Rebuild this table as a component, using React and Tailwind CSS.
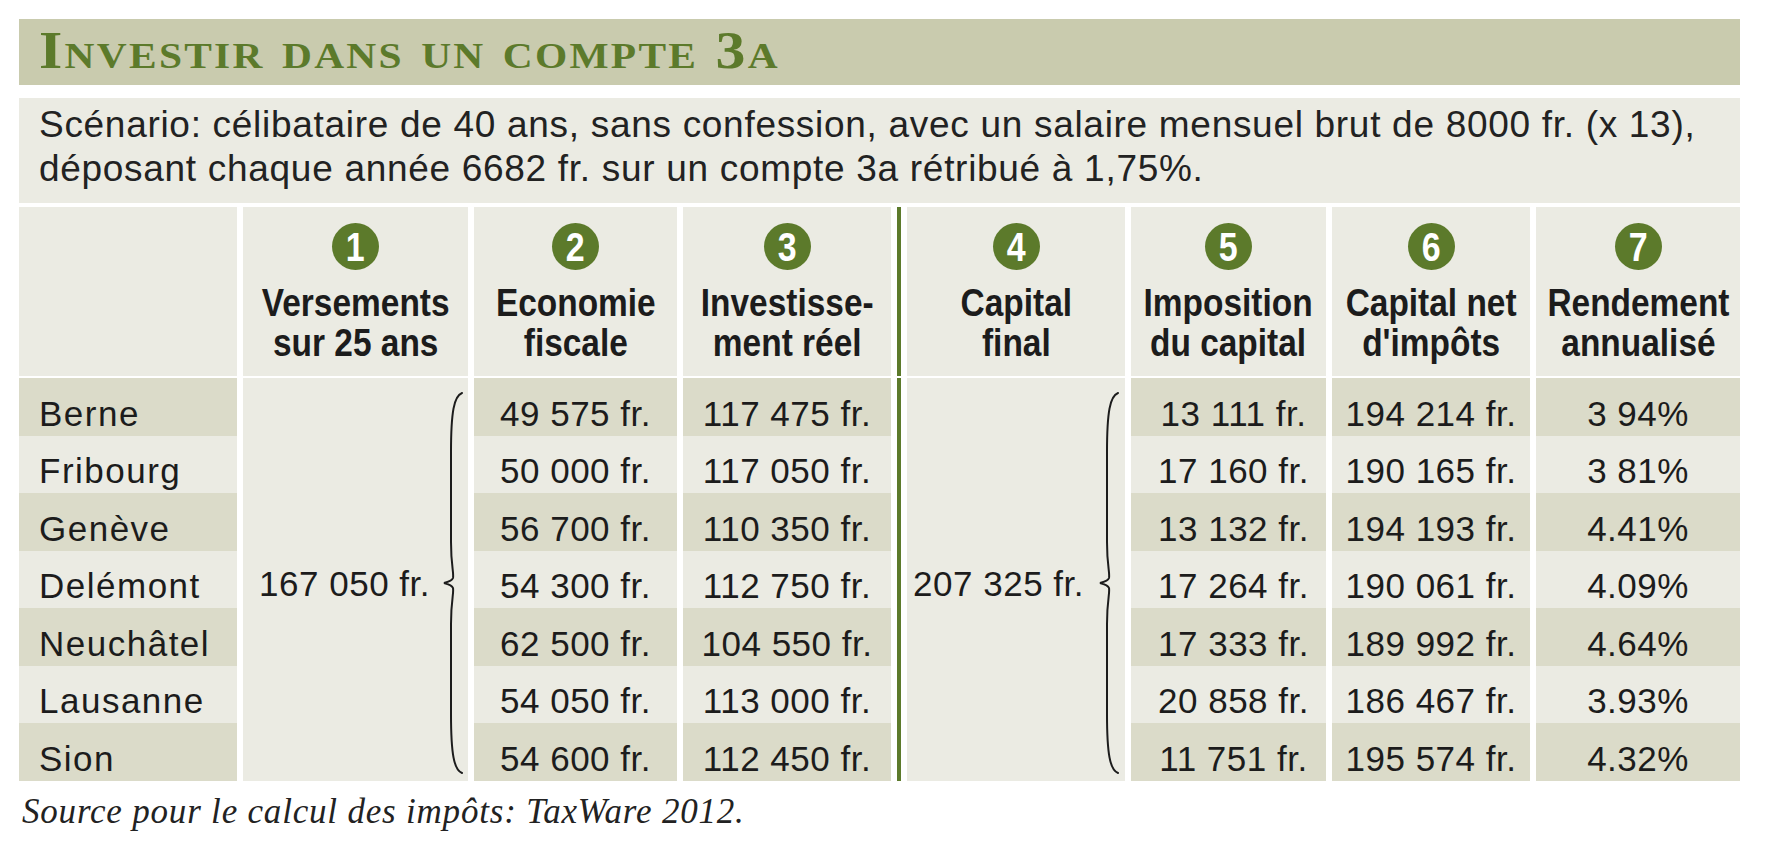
import React from 'react';

const ROWS = [
  { city: 'Berne', eco: '49 575 fr.', inv: '117 475 fr.', tax: '13 111 fr.', net: '194 214 fr.', yld: '3 94%' },
  { city: 'Fribourg', eco: '50 000 fr.', inv: '117 050 fr.', tax: '17 160 fr.', net: '190 165 fr.', yld: '3 81%' },
  { city: 'Genève', eco: '56 700 fr.', inv: '110 350 fr.', tax: '13 132 fr.', net: '194 193 fr.', yld: '4.41%' },
  { city: 'Delémont', eco: '54 300 fr.', inv: '112 750 fr.', tax: '17 264 fr.', net: '190 061 fr.', yld: '4.09%' },
  { city: 'Neuchâtel', eco: '62 500 fr.', inv: '104 550 fr.', tax: '17 333 fr.', net: '189 992 fr.', yld: '4.64%' },
  { city: 'Lausanne', eco: '54 050 fr.', inv: '113 000 fr.', tax: '20 858 fr.', net: '186 467 fr.', yld: '3.93%' },
  { city: 'Sion', eco: '54 600 fr.', inv: '112 450 fr.', tax: '11 751 fr.', net: '195 574 fr.', yld: '4.32%' },
];

const HEADS = [
  { n: '1', l1: 'Versements', l2: 'sur 25 ans' },
  { n: '2', l1: 'Economie', l2: 'fiscale' },
  { n: '3', l1: 'Investisse-', l2: 'ment réel' },
  { n: '4', l1: 'Capital', l2: 'final' },
  { n: '5', l1: 'Imposition', l2: 'du capital' },
  { n: '6', l1: 'Capital net', l2: "d'impôts" },
  { n: '7', l1: 'Rendement', l2: 'annualisé' },
];

const GRID = 'grid grid-cols-[218px_225px_203px_208px_4px_218px_195px_198px_204px] gap-x-[6px]';

function Brace() {
  return (
    <svg width="22" height="382" viewBox="0 0 22 382" fill="none" className="shrink-0">
      <path
        d="M20 1 C12 4, 9 20, 9 60 L9 150 C9 175, 12 180, 11 186 C10 189, 6 190, 2 191 C6 192, 10 193, 11 196 C12 202, 9 207, 9 232 L9 322 C9 362, 12 378, 20 381"
        stroke="#1c1c1c"
        strokeWidth="2"
        strokeLinecap="round"
      />
    </svg>
  );
}

function HeadCell({ head }) {
  return (
    <div className="flex flex-col items-center bg-[#ebebe3] pt-[16px]">
      <div className="flex h-[47px] w-[47px] items-center justify-center rounded-full bg-[#5c7a2b]">
        <span className="inline-block scale-x-85 text-[40px] font-bold leading-none text-white">{head.n}</span>
      </div>
      <div className="mt-[13px] inline-block scale-x-88 whitespace-nowrap text-center text-[38px] font-bold leading-[40px] text-[#1c1c1c]">
        {head.l1}
        <br />
        {head.l2}
      </div>
    </div>
  );
}

function ValueCell({ value, dark, className = '' }) {
  return (
    <div className={`flex items-end justify-center pb-[5px] text-[35px] leading-none tracking-[0.5px] ${dark ? 'bg-[#dbdbc9]' : 'bg-[#ebebe3]'} ${className}`}>
      {value}
    </div>
  );
}

export default function App() {
  return (
    <div className="min-h-screen bg-white pl-[19px] pt-[19px] text-[#1c1c1c] font-['Liberation_Sans',Arial,sans-serif]">
      <div className="w-[1721px]">

        {/* Title */}
        <div className="h-[66px] bg-[#c9cbae] pl-[20px] pt-[6px]">
          <h1 className="inline-block origin-left scale-x-115 whitespace-nowrap font-['Liberation_Serif',serif] text-[52px] font-bold leading-none tracking-[2px] text-[#5c7a2b] [font-variant:small-caps]">
            Investir dans un compte 3a
          </h1>
        </div>

        {/* Scenario */}
        <div className="mt-[13px] h-[105px] bg-[#ebebe3] px-[20px] pt-[5px] text-[37px] leading-[44px] tracking-[0.7px] text-[#222]">
          Scénario: célibataire de 40 ans, sans confession, avec un salaire mensuel brut de 8000 fr. (x 13),
          <br />
          déposant chaque année 6682 fr. sur un compte 3a rétribué à 1,75%.
        </div>

        {/* Header */}
        <div className={`${GRID} mt-[4px] h-[169px]`}>
          <div className="bg-[#ebebe3]" />
          <HeadCell head={HEADS[0]} />
          <HeadCell head={HEADS[1]} />
          <HeadCell head={HEADS[2]} />
          <div className="bg-[#5c7a2b]" />
          <HeadCell head={HEADS[3]} />
          <HeadCell head={HEADS[4]} />
          <HeadCell head={HEADS[5]} />
          <HeadCell head={HEADS[6]} />
        </div>

        {/* Body */}
        <div className={`${GRID} mt-[2px] grid-rows-[repeat(7,57.5px)]`}>
          <div className="col-start-2 row-span-7 row-start-1 flex items-center justify-end bg-[#ebebe3] pr-[4px] pt-[8px]">
            <span className="mr-[12px] text-[35px] leading-none tracking-[0.5px]">167 050 fr.</span>
            <Brace />
          </div>
          <div className="col-start-5 row-span-7 row-start-1 bg-[#5c7a2b]" />
          <div className="col-start-6 row-span-7 row-start-1 flex items-center justify-end bg-[#ebebe3] pr-[5px] pt-[8px]">
            <span className="mr-[14px] text-[35px] leading-none tracking-[0.5px]">207 325 fr.</span>
            <Brace />
          </div>

          {ROWS.map((row, i) => {
            const dark = i % 2 === 0;
            return (
              <React.Fragment key={row.city}>
                <div className={`flex items-end pb-[5px] pl-[20px] text-[35px] leading-none tracking-[1.5px] ${dark ? 'bg-[#dbdbc9]' : 'bg-[#ebebe3]'}`}>
                  {row.city}
                </div>
                <ValueCell value={row.eco} dark={dark} />
                <ValueCell value={row.inv} dark={dark} />
                <ValueCell value={row.tax} dark={dark} className="pl-[10px]" />
                <ValueCell value={row.net} dark={dark} />
                <ValueCell value={row.yld} dark={dark} />
              </React.Fragment>
            );
          })}
        </div>

        {/* Source */}
        <p className="mt-[13px] pl-[3px] font-['Liberation_Serif',serif] text-[35px] italic leading-none tracking-[0.8px] text-[#222]">
          Source pour le calcul des impôts: TaxWare 2012.
        </p>
      </div>
    </div>
  );
}
